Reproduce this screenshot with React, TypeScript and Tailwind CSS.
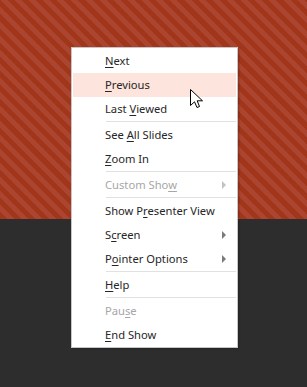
import React from 'react';

type Item =
  | { kind: 'sep' }
  | {
      kind: 'item';
      before: string;
      key: string;
      after: string;
      disabled?: boolean;
      submenu?: boolean;
      active?: boolean;
    };

const items: Item[] = [
  { kind: 'item', before: '', key: 'N', after: 'ext' },
  { kind: 'item', before: '', key: 'P', after: 'revious', active: true },
  { kind: 'item', before: 'Last ', key: 'V', after: 'iewed' },
  { kind: 'sep' },
  { kind: 'item', before: 'See ', key: 'A', after: 'll Slides' },
  { kind: 'item', before: '', key: 'Z', after: 'oom In' },
  { kind: 'sep' },
  { kind: 'item', before: 'Custom Sho', key: 'w', after: '', disabled: true, submenu: true },
  { kind: 'sep' },
  { kind: 'item', before: 'Show P', key: 'r', after: 'esenter View' },
  { kind: 'item', before: 'S', key: 'c', after: 'reen', submenu: true },
  { kind: 'item', before: 'P', key: 'o', after: 'inter Options', submenu: true },
  { kind: 'sep' },
  { kind: 'item', before: '', key: 'H', after: 'elp' },
  { kind: 'sep' },
  { kind: 'item', before: 'Pau', key: 's', after: 'e', disabled: true },
  { kind: 'item', before: '', key: 'E', after: 'nd Show' },
];

const Cursor = () => (
  <svg width="14" height="20" viewBox="0 0 14 20" className="block">
    <path
      d="M0.5 0.5 L0.5 16.5 L4.5 12.8 L7 18.5 L9.5 17.5 L7.2 11.8 L12.5 11.8 Z"
      fill="#ffffff"
      stroke="#000000"
      strokeWidth="1"
      strokeLinejoin="miter"
    />
  </svg>
);

export default function App() {
  return (
    <div className="relative w-[307px] h-[387px] overflow-hidden bg-[#2d2d2d] font-['Noto_Sans',sans-serif]">
      {/* Slide background */}
      <div className="h-[219px] bg-[repeating-linear-gradient(45deg,#a2361b_0px,#a2361b_5px,#ab4530_5px,#ab4530_10px)]" />

      {/* Context menu */}
      <div className="absolute left-[71px] top-[47px] w-[167px] bg-white border border-[#c6c6c6] pt-px px-px shadow-[1px_1px_2px_rgba(0,0,0,0.25)]">
        {items.map((it, i) =>
          it.kind === 'sep' ? (
            <div key={i} className="h-[2px] pl-[33px]">
              <div className="h-px bg-[#e1e1e1]" />
            </div>
          ) : (
            <div
              key={i}
              className={`relative flex items-center h-6 pl-[32px] text-[11.2px] ${
                it.active ? 'bg-[#fde4dc]' : ''
              } ${it.disabled ? 'text-[#a6a6a6]' : 'text-[#262626]'}`}
            >
              <span className="leading-none">
                {it.before}
                <span className="underline underline-offset-[1.5px]">{it.key}</span>
                {it.after}
              </span>
              {it.submenu && (
                <span
                  className={`absolute right-[10px] top-1/2 -translate-y-1/2 w-0 h-0 border-y-[4px] border-y-transparent border-l-[4px] ${
                    it.disabled ? 'border-l-[#c2c2c2]' : 'border-l-[#7a7a7a]'
                  }`}
                />
              )}
            </div>
          )
        )}
      </div>

      {/* Mouse pointer */}
      <div className="absolute left-[190px] top-[89px]">
        <Cursor />
      </div>
    </div>
  );
}
